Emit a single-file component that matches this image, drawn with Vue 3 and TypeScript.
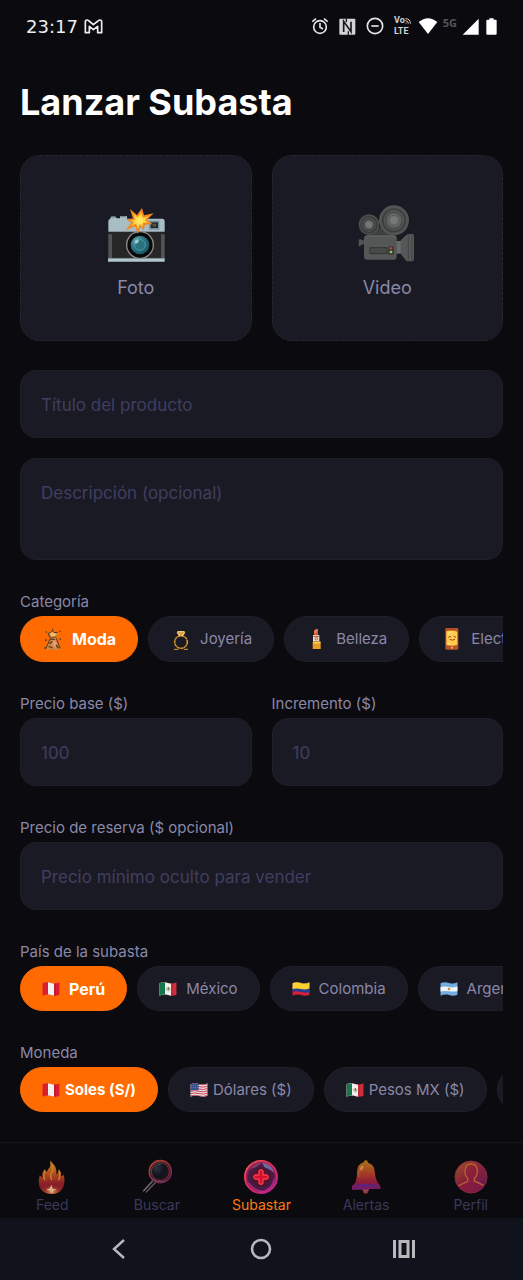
<script setup lang="ts">
import { ref } from 'vue'

interface Option {
  id: string
  label: string
  icon: string
  box: string
}

const flagBox = '0 0 54 42'

const categories: Option[] = [
  { id: 'moda', label: 'Moda', icon: 'ic-dress', box: '126 117 66 66' },
  { id: 'joyeria', label: 'Joyería', icon: 'ic-ring', box: '510 117 66 66' },
  { id: 'belleza', label: 'Belleza', icon: 'ic-lipstick', box: '129 117 66 66' },
  { id: 'electronica', label: 'Electrónica', icon: 'ic-phone', box: '528 117 66 66' },
]

const countries: Option[] = [
  { id: 'pe', label: 'Perú', icon: 'flag-pe', box: flagBox },
  { id: 'mx', label: 'México', icon: 'flag-mx', box: flagBox },
  { id: 'co', label: 'Colombia', icon: 'flag-co', box: flagBox },
  { id: 'ar', label: 'Argentina', icon: 'flag-ar', box: flagBox },
]

const currencies: Option[] = [
  { id: 'pen', label: 'Soles (S/)', icon: 'flag-pe', box: flagBox },
  { id: 'usd', label: 'Dólares ($)', icon: 'flag-us', box: flagBox },
  { id: 'mxn', label: 'Pesos MX ($)', icon: 'flag-mx', box: flagBox },
  { id: 'cop', label: 'Pesos COP ($)', icon: 'flag-co', box: flagBox },
]

const tabs: Option[] = [
  { id: 'feed', label: 'Feed', icon: 'nav-flame', box: '104 72 108 108' },
  { id: 'buscar', label: 'Buscar', icon: 'nav-search', box: '417 72 108 108' },
  { id: 'subastar', label: 'Subastar', icon: 'nav-plus', box: '-54 72 108 108' },
  { id: 'alertas', label: 'Alertas', icon: 'nav-bell', box: '258 72 108 108' },
  { id: 'perfil', label: 'Perfil', icon: 'nav-user', box: '572 72 108 108' },
]

const title = ref('')
const description = ref('')
const basePrice = ref('')
const increment = ref('')
const reserve = ref('')
const category = ref('moda')
const country = ref('pe')
const currency = ref('pen')
const activeTab = ref('subastar')
</script>

<template>
  <div class="app">
    <svg class="sprite" width="0" height="0" aria-hidden="true">
      <defs>
        <linearGradient id="g-flame" x1="0" y1="0" x2="0" y2="1">
          <stop offset="0" stop-color="#c08c24" /><stop offset=".35" stop-color="#b8561e" />
          <stop offset=".7" stop-color="#8a1e27" /><stop offset="1" stop-color="#7c2427" />
        </linearGradient>
        <radialGradient id="g-ember" cx=".5" cy=".85" r=".5">
          <stop offset="0" stop-color="#e0a060" /><stop offset=".5" stop-color="#b0482c" stop-opacity=".7" />
          <stop offset="1" stop-color="#8a1e28" stop-opacity="0" />
        </radialGradient>
        <linearGradient id="g-lens" x1="0" y1="0" x2=".7" y2="1">
          <stop offset="0" stop-color="#b04a2c" /><stop offset=".5" stop-color="#94303a" /><stop offset="1" stop-color="#702058" />
        </linearGradient>
        <radialGradient id="g-glass" cx=".35" cy=".35" r=".7">
          <stop offset="0" stop-color="#283040" /><stop offset=".5" stop-color="#10131c" /><stop offset="1" stop-color="#2b1724" />
        </radialGradient>
        <radialGradient id="g-orb" cx=".5" cy=".5" r=".5">
          <stop offset="0" stop-color="#a50f32" /><stop offset=".45" stop-color="#48152f" />
          <stop offset=".78" stop-color="#4a1d49" /><stop offset=".9" stop-color="#a62055" /><stop offset="1" stop-color="#e43a78" />
        </radialGradient>
        <linearGradient id="g-rim" x1="0" y1="0" x2="1" y2="1">
          <stop offset="0" stop-color="#ff6250" /><stop offset=".5" stop-color="#dc2850" /><stop offset="1" stop-color="#ae1bc0" />
        </linearGradient>
        <linearGradient id="g-bell" x1="0" y1="0" x2="0" y2="1">
          <stop offset="0" stop-color="#a87418" /><stop offset=".35" stop-color="#a84222" />
          <stop offset=".65" stop-color="#8f1b38" /><stop offset=".86" stop-color="#701d6c" /><stop offset="1" stop-color="#9a3f35" />
        </linearGradient>
        <linearGradient id="g-user" x1="0" y1="0" x2=".8" y2="1">
          <stop offset="0" stop-color="#a35426" /><stop offset=".5" stop-color="#842338" /><stop offset="1" stop-color="#681658" />
        </linearGradient>
        <radialGradient id="g-camera" cx=".35" cy=".3" r=".8">
          <stop offset="0" stop-color="#70aeb9" /><stop offset=".4" stop-color="#2f7b88" /><stop offset="1" stop-color="#155260" />
        </radialGradient>
        <radialGradient id="g-flash" cx=".5" cy=".5" r=".5">
          <stop offset="0" stop-color="#fff176" /><stop offset=".6" stop-color="#ffd03d" /><stop offset="1" stop-color="#f6a623" />
        </radialGradient>
        <clipPath id="wave">
          <path d="M1 4 C10 0 18 0 27 3 S44 5 53 1 V38 C44 42 36 42 27 39 S10 38 1 41Z" />
        </clipPath>
      </defs>

      <symbol id="photo" viewBox="76 42 180 180">
        <path d="M83 93 Q83 88 88 87 L91 80 H105 L108 85 H118 V78 H139 V86 H246 Q252 87 252 94 V125 H83Z" fill="#a9bdc4" />
        <path d="M92 81 h12 M119 80 h18" stroke="#718891" stroke-width="4" />
        <path d="M205 92 H236 V119 H205Z" fill="#7a929b" />
        <rect x="210" y="97" width="22" height="17" fill="#20272b" />
        <rect x="216" y="101" width="11" height="9" fill="#54504c" />
        <path d="M82 126 H252 V206 H82Z" fill="#262627" />
        <path d="M83 133 H94 V204 H83Z M241 133 H252 V204 H241Z" fill="#515355" />
        <path d="M82 205 H252 V215 H82Z" fill="#b3c6cd" />
        <path d="M82 205 H252" stroke="#718891" stroke-width="2" />
        <circle cx="178" cy="165" r="42" fill="#8d8c8c" />
        <circle cx="178" cy="165" r="38" fill="#080809" />
        <circle cx="178" cy="165" r="28" fill="url(#g-camera)" />
        <circle cx="178" cy="165" r="16" fill="#297381" stroke="#4c96a0" stroke-width="3" />
        <ellipse cx="168" cy="155" rx="7" ry="5" fill="#9dcbd2" transform="rotate(-38 168 155)" />
        <path d="M148 57 L169 75 L184 54 L190 76 L219 70 L199 89 L216 103 L193 104 L189 121 L179 110 L171 132 L164 109 L135 121 L152 98 L136 88 L157 86Z" fill="#f18720" />
        <path d="M154 66 L171 82 L182 65 L187 83 L207 77 L193 90 L204 98 L187 98 L185 111 L177 103 L171 121 L167 101 L147 110 L160 96 L148 91 L164 89Z" fill="url(#g-flash)" />
      </symbol>

      <symbol id="video" viewBox="82 42 180 180">
        <path d="M119 124 Q145 113 151 112 H181 L194 136 H119Z" fill="#3c3f3d" />
        <circle cx="118" cy="104" r="31" fill="#4b4d4c" />
        <circle cx="118" cy="104" r="24" fill="none" stroke="#373b39" stroke-width="4" />
        <circle cx="118" cy="104" r="15" fill="#686969" stroke="#3a3d3b" stroke-width="3" />
        <circle cx="118" cy="104" r="8" fill="#777877" />
        <circle cx="193" cy="91" r="45" fill="#525453" />
        <circle cx="193" cy="91" r="34" fill="none" stroke="#3a3e3c" stroke-width="5" />
        <circle cx="193" cy="91" r="24" fill="#616362" stroke="#454746" stroke-width="3" />
        <circle cx="193" cy="91" r="12" fill="#777978" />
        <path d="M87 149 L92 147 L98 151 H105 V163 H98 L91 169 H87Z" fill="#505251" />
        <rect x="103" y="136" width="98" height="73" rx="9" fill="#555756" />
        <path d="M110 138 H192 Q199 138 199 145" stroke="#676968" stroke-width="3" fill="none" />
        <path d="M200 153 H215 V191 H200Z" fill="#686b69" />
        <path d="M213 151 L229 136 Q233 132 238 132 H248 Q253 132 253 138 V207 Q253 214 247 214 H235 Q230 214 227 209 L213 191Z" fill="#555856" />
        <path d="M236 134 V211 M247 136 V210" stroke="#444745" stroke-width="4" />
        <rect x="121" y="173" width="51" height="18" fill="#484a49" stroke="#313433" stroke-width="3" />
        <rect x="176" y="169" width="17" height="25" rx="2" fill="#373a38" />
        <circle cx="184" cy="175" r="4" fill="#b94438" />
        <circle cx="184" cy="186" r="4" fill="#92d456" />
      </symbol>

      <symbol id="ic-dress" viewBox="126 117 66 66">
        <path d="M157 119 L160 130 L170 128 L176 132 L169 145 L174 157 L182 181 L172 184 L162 181 L149 184 L136 181 L144 159 L149 145 L142 137 L146 129 L155 132Z" fill="#d28745" />
        <path d="M157 119 L160 131 L173 130 M155 128 L144 134 L149 144 H169 M151 147 L144 164 L137 180 M169 148 L180 178" fill="none" stroke="#55331c" stroke-width="3" />
        <path d="M151 132 L157 129 L168 134 L166 142 L153 143Z" fill="#f7bd5c" />
        <path d="M162 146 L171 165 L166 178 L157 165Z" fill="#e59b7d" />
        <path d="M151 150 L165 152 M148 164 L157 158 M146 172 L158 177 M168 168 L176 178" stroke="#693817" stroke-width="4" />
        <path d="M137 127h4v4h-4z M177 125h5v4h-5z M135 151h5v5h-5z M179 148h4v5h-4z M133 175h5v4h-5z" fill="#713c14" />
      </symbol>

      <symbol id="ic-ring" viewBox="510 117 66 66">
        <circle cx="543" cy="159" r="19" fill="none" stroke="#8d5b19" stroke-width="5" />
        <circle cx="543" cy="159" r="19" fill="none" stroke="#efb545" stroke-width="3" stroke-dasharray="8 3" />
        <path d="M533 126 H553 L556 132 L547 142 H539 L530 132Z" fill="#ffd57a" />
        <path d="M531 132 H555 M538 127 L543 141 L548 127" fill="none" stroke="#b77527" stroke-width="2" />
        <path d="M522 181 H535 M551 181 H564" stroke="#db9d37" stroke-width="3" />
      </symbol>

      <symbol id="ic-lipstick" viewBox="129 117 66 66">
        <path d="M153 139 V126 Q157 119 165 120 V139Z" fill="#d35d3a" />
        <path d="M153 127 Q158 120 164 120 L156 136Z" fill="#ed895a" />
        <rect x="150" y="138" width="19" height="19" fill="#ece2cf" />
        <path d="M151 142 H168" stroke="#aa5236" stroke-width="3" />
        <circle cx="160" cy="149" r="4" fill="none" stroke="#c65341" stroke-width="3" />
        <path d="M149 158 H173 V180 H149Z" fill="#e69e24" />
        <path d="M150 158 H172 V163 H150Z" fill="#ffd157" />
      </symbol>

      <symbol id="ic-phone" viewBox="528 117 66 66">
        <rect x="541" y="117" width="39" height="65" rx="4" fill="#b85327" />
        <path d="M544 127 Q561 122 577 128 V168 Q560 173 544 168Z" fill="#ffca4d" />
        <path d="M550 145 L558 142 M566 142 L573 145 M554 151 Q562 156 570 151 M553 121 H567" stroke="#8f4b1c" stroke-width="3" fill="none" />
        <circle cx="561" cy="176" r="3" fill="#ffc468" />
        <path d="M549 132 H559 M549 164 H555" stroke="#ffe98b" stroke-width="3" />
      </symbol>

      <symbol id="flag-pe" viewBox="0 0 54 42">
        <g clip-path="url(#wave)">
          <rect width="54" height="42" fill="#d81e32" /><rect x="18" width="18" height="42" fill="#f4f0f0" />
          <path d="M36 0h6v42h-6z" fill="#a9122e" opacity=".45" />
        </g>
      </symbol>
      <symbol id="flag-mx" viewBox="0 0 54 42">
        <g clip-path="url(#wave)">
          <rect width="54" height="42" fill="#cf2e3d" /><rect width="36" height="42" fill="#f0f0ec" /><rect width="18" height="42" fill="#16754f" />
          <path d="M22 18 Q24 27 29 27 Q33 24 32 18" fill="none" stroke="#6e884b" stroke-width="2" />
          <path d="M25 16 L30 15 L31 22 L27 24Z" fill="#956c42" />
          <path d="M36 0h5v42h-5z" fill="#a61f34" opacity=".4" />
        </g>
      </symbol>
      <symbol id="flag-co" viewBox="0 0 54 42">
        <g clip-path="url(#wave)">
          <rect width="54" height="42" fill="#d81f3a" />
          <path d="M0 0H54V29Q43 35 27 30T0 31Z" fill="#263f90" />
          <path d="M0 0H54V19Q43 24 27 21T0 22Z" fill="#fbd12d" />
        </g>
      </symbol>
      <symbol id="flag-ar" viewBox="0 0 54 42">
        <g clip-path="url(#wave)">
          <rect width="54" height="42" fill="#73aee0" />
          <path d="M0 15Q14 12 27 15T54 13V27Q43 30 27 28T0 29Z" fill="#f3f4f4" />
          <circle cx="27" cy="21" r="4" fill="#c98b3b" />
        </g>
      </symbol>
      <symbol id="flag-us" viewBox="0 0 54 42">
        <g clip-path="url(#wave)">
          <rect width="54" height="42" fill="#e7e2e6" />
          <path d="M0 4Q14 0 27 4T54 2M0 11Q14 7 27 11T54 9M0 18Q14 14 27 18T54 16M0 25Q14 21 27 25T54 23M0 32Q14 28 27 32T54 30M0 39Q14 35 27 39T54 37" fill="none" stroke="#c93c4c" stroke-width="3" />
          <path d="M0 0H26V22Q14 19 0 23Z" fill="#394f8c" />
          <path d="M4 8H24M4 14H24" stroke="#b5bed9" stroke-width="2" stroke-dasharray="2 4" />
        </g>
      </symbol>

      <symbol id="nav-flame" viewBox="104 72 108 108">
        <path d="M153 75 Q158 85 165 91 Q173 101 171 119 Q177 116 178 103 Q187 112 185 124 L194 120 Q197 135 194 149 Q189 174 160 177 Q128 178 120 154 Q116 137 121 121 L130 128 Q126 111 137 103 L142 112 Q146 103 151 97 Q157 86 153 75Z" fill="url(#g-flame)" />
        <path d="M120 136 Q128 148 137 146 Q146 138 157 144 Q170 136 178 146 Q187 144 194 134 Q194 174 160 177 Q126 177 120 152Z" fill="url(#g-ember)" />
        <path d="M154 84 Q164 96 159 110 Q150 122 157 134 M137 108 Q130 122 136 134 M180 108 Q184 122 178 134" stroke="#c98428" stroke-width="4" fill="none" stroke-linecap="round" />
        <path d="M156 149 L160 161 L172 163 L162 167 L157 176 L152 167 L141 164 L151 160Z" fill="#ddb08b" />
      </symbol>

      <symbol id="nav-search" viewBox="417 72 108 108">
        <path d="M457 138 L430 168 M467 142 L439 171" stroke="#62595f" stroke-width="4" stroke-linecap="round" />
        <path d="M459 139 L432 168" stroke="#8a838e" stroke-width="2" />
        <circle cx="481" cy="110" r="33" fill="url(#g-glass)" stroke="url(#g-lens)" stroke-width="5" />
        <circle cx="481" cy="110" r="27" fill="none" stroke="#8a2f38" stroke-width="3" />
        <path d="M464 98 Q470 88 484 87" fill="none" stroke="#3c4a5c" stroke-width="3" />
        <path d="M456 130 Q474 145 495 139" fill="none" stroke="#78436b" stroke-width="3" />
      </symbol>

      <symbol id="nav-plus" viewBox="-54 72 108 108">
        <circle cx="0" cy="126" r="49" fill="url(#g-orb)" stroke="url(#g-rim)" stroke-width="4" />
        <path d="M-34 104 Q-20 84 0 84 Q-8 94 -18 98 Q-28 100 -34 104Z" fill="#c86a8a" opacity=".4" />
        <path d="M4 83 Q31 86 40 113 Q27 102 10 97Z" fill="#8088c0" opacity=".7" />
        <path d="M-38 143 Q-18 171 12 170 M40 132 Q35 157 14 167" fill="none" stroke="#d72bbb" stroke-width="4" opacity=".6" />
        <path d="M-6 108 Q0 100 6 108 V120 H18 Q26 126 18 132 H6 V144 Q0 152 -6 144 V132 H-18 Q-26 126 -18 120 H-6Z" fill="#d41030" stroke="#ff3a4a" stroke-width="4" stroke-linejoin="round" />
      </symbol>

      <symbol id="nav-bell" viewBox="258 72 108 108">
        <path d="M305 82 Q307 75 312 76 Q317 76 318 83 Q337 88 338 108 Q339 128 346 141 L355 153 V162 H321 Q320 176 311 176 Q303 176 302 164 H270 V154 L280 143 Q285 131 285 111 Q286 87 305 82Z" fill="url(#g-bell)" />
        <path d="M291 126 Q287 104 300 92 M303 164 Q311 172 319 164" fill="none" stroke="#b06037" stroke-width="3" />
        <ellipse cx="299" cy="99" rx="4" ry="8" fill="#c68b51" transform="rotate(25 299 99)" />
        <path d="M280 154 Q311 146 346 154" fill="none" stroke="#582583" stroke-width="6" />
      </symbol>

      <symbol id="nav-user" viewBox="572 72 108 108">
        <circle cx="626" cy="126" r="48" fill="url(#g-user)" stroke="#8a2b44" stroke-width="3" />
        <path d="M590 153 L616 139 V130 Q607 122 609 105 Q611 89 627 89 Q645 91 643 111 Q641 124 636 130 V138 L662 152 Q650 172 627 173 Q602 173 590 153Z" fill="#8e1b3e" opacity=".55" />
        <path d="M608 107 Q609 87 627 87 Q645 88 645 108 Q644 125 636 130 V138 Q650 143 663 151 M608 107 Q608 124 616 130 V139 L589 152" fill="none" stroke="#b55f33" stroke-width="4" />
      </symbol>
    </svg>

    <header class="status">
      <div class="status-left">
        <time>23:17</time>
        <svg width="19" height="15" viewBox="0 0 57 45" aria-label="Gmail">
          <path d="M4 41 V8 Q4 3 9 3 Q12 3 15 6 L28 17 L42 6 Q45 3 48 3 Q53 3 53 8 V41 H41 V22 L28 32 L16 22 V41Z" fill="none" stroke="#eeeef0" stroke-width="5" stroke-linejoin="round" />
        </svg>
      </div>
      <div class="status-right">
        <svg width="18" height="18" viewBox="0 0 54 54" aria-label="Alarma">
          <circle cx="27" cy="30" r="19" fill="none" stroke="#e4e4e6" stroke-width="5" />
          <path d="M27 18 V31 L36 36 M4 14 L15 5 M39 5 L50 14" fill="none" stroke="#e4e4e6" stroke-width="5" />
        </svg>
        <svg width="17" height="17" viewBox="0 0 51 51" aria-label="NFC">
          <rect x="1" y="2" width="48" height="48" rx="3" fill="#d4d4d7" />
          <path d="M14 42 V10 L36 41 V11" fill="none" stroke="#17171c" stroke-width="5" />
          <path d="M22 2 V12 M28 40 V50" stroke="#17171c" stroke-width="4" />
        </svg>
        <svg width="18" height="18" viewBox="0 0 54 54" aria-label="No molestar">
          <circle cx="27" cy="27" r="23" fill="none" stroke="#e4e4e6" stroke-width="5" />
          <path d="M16 27 H38" stroke="#e4e4e6" stroke-width="5" />
        </svg>
        <span class="volte">
          <span class="vo">Vo<svg width="6" height="6" viewBox="0 0 18 18" aria-hidden="true"><path d="M1 2 Q16 2 16 17 M1 8 Q10 8 10 17 M1 14 L4 17" fill="none" stroke="#d4d4d7" stroke-width="3" /></svg></span>
          <span>LTE</span>
        </span>
        <span class="signal">
          <svg width="20" height="18" viewBox="0 0 60 54" aria-label="Wi-Fi"><path d="M2 15 Q30 -8 58 15 L30 51Z" fill="#fff" /></svg>
          <span class="five">5G</span>
          <svg width="17" height="17" viewBox="0 0 51 51" aria-label="Señal"><path d="M2 50 H50 V2Z" fill="#fff" /></svg>
        </span>
        <svg width="11" height="17" viewBox="0 0 33 51" aria-label="Batería"><path d="M10 1 H23 V5 H29 Q32 5 32 8 V47 Q32 50 29 50 H4 Q1 50 1 47 V8 Q1 5 4 5 H10Z" fill="#fff" /></svg>
      </div>
    </header>

    <main class="content">
      <h1>Lanzar Subasta</h1>

      <div class="pair">
        <button type="button" class="media"><svg width="60" height="60" aria-hidden="true"><use href="#photo" /></svg><span>Foto</span></button>
        <button type="button" class="media"><svg width="60" height="60" aria-hidden="true"><use href="#video" /></svg><span>Video</span></button>
      </div>

      <form class="form" @submit.prevent>
        <input v-model="title" class="field lead" type="text" placeholder="Título del producto" aria-label="Título del producto">
        <textarea v-model="description" class="field area" placeholder="Descripción (opcional)" aria-label="Descripción (opcional)"></textarea>

        <section class="group" aria-labelledby="l-category">
          <span id="l-category" class="label">Categoría</span>
          <div class="chips">
            <button v-for="c in categories" :key="c.id" type="button" class="chip" :class="{ on: category === c.id }" :aria-pressed="category === c.id" @click="category = c.id">
              <svg width="22" height="22" aria-hidden="true"><use :href="`#${c.icon}`" /></svg>{{ c.label }}
            </button>
          </div>
        </section>

        <div class="pair group">
          <div>
            <label class="label" for="base">Precio base ($)</label>
            <input id="base" v-model="basePrice" class="field" type="text" inputmode="decimal" placeholder="100">
          </div>
          <div>
            <label class="label" for="step">Incremento ($)</label>
            <input id="step" v-model="increment" class="field" type="text" inputmode="decimal" placeholder="10">
          </div>
        </div>

        <div class="group">
          <label class="label" for="reserve">Precio de reserva ($ opcional)</label>
          <input id="reserve" v-model="reserve" class="field" type="text" inputmode="decimal" placeholder="Precio mínimo oculto para vender">
        </div>

        <section class="group" aria-labelledby="l-country">
          <span id="l-country" class="label">País de la subasta</span>
          <div class="chips countries">
            <button v-for="c in countries" :key="c.id" type="button" class="chip" :class="{ on: country === c.id }" :aria-pressed="country === c.id" @click="country = c.id">
              <svg width="18" height="14" aria-hidden="true"><use :href="`#${c.icon}`" /></svg>{{ c.label }}
            </button>
          </div>
        </section>

        <section class="group" aria-labelledby="l-currency">
          <span id="l-currency" class="label">Moneda</span>
          <div class="chips currencies">
            <button v-for="c in currencies" :key="c.id" type="button" class="chip" :class="{ on: currency === c.id }" :aria-pressed="currency === c.id" @click="currency = c.id">
              <svg width="18" height="14" aria-hidden="true"><use :href="`#${c.icon}`" /></svg>{{ c.label }}
            </button>
          </div>
        </section>
      </form>
    </main>

    <nav class="tabs" aria-label="Principal">
      <a v-for="t in tabs" :key="t.id" :href="`#${t.id}`" class="tab" :class="{ current: activeTab === t.id }" @click="activeTab = t.id">
        <svg width="36" height="36" aria-hidden="true"><use :href="`#${t.icon}`" /></svg>
        <span>{{ t.label }}</span>
      </a>
    </nav>

    <footer class="system">
      <button type="button" aria-label="Atrás"><svg width="24" height="24" viewBox="0 0 24 24"><path d="M17 3 L7 12 L17 21" fill="none" stroke="#b8b8bd" stroke-width="2.4" /></svg></button>
      <button type="button" aria-label="Inicio"><svg width="24" height="24" viewBox="0 0 24 24"><circle cx="12" cy="12" r="9" fill="none" stroke="#b8b8bd" stroke-width="2.6" /></svg></button>
      <button type="button" aria-label="Recientes"><svg width="24" height="24" viewBox="0 0 24 24"><path d="M2.500 3 V21 M21.500 3 V21 M8 4.500 H16 V19.500 H8Z" fill="none" stroke="#b8b8bd" stroke-width="3" /></svg></button>
    </footer>
  </div>
</template>

<style>
body {
  background: #0a0a0f;
}
</style>

<style scoped>
.app {
  display: flex;
  flex-direction: column;
  min-height: 100vh;
  background: #0a0a0f;
  color: #fff;
  font-family: Inter, "Noto Sans", sans-serif;
}
.app *,
.app {
  box-sizing: border-box;
}
.sprite {
  position: absolute;
}
svg {
  display: block;
  flex: none;
}
button {
  font: inherit;
  cursor: pointer;
}
.status {
  display: flex;
  align-items: center;
  justify-content: space-between;
  height: 52px;
  padding: 0 26px;
}
.status-left,
.status-right,
.signal,
.vo {
  display: flex;
  align-items: center;
}
.status-left {
  gap: 6px;
  font-family: "DejaVu Sans", sans-serif;
  font-size: 18px;
  color: #eeeef0;
}
.status-right {
  gap: 10px;
}
.volte {
  font: 700 9px/11px Roboto, sans-serif;
  color: #d4d4d7;
}
.volte > span {
  display: flex;
  height: 11px;
}
.signal {
  gap: 5px;
  margin: 0 -3px;
}
.five {
  align-self: flex-start;
  font: 700 11px/11px "Noto Sans", sans-serif;
  color: #55555a;
}
.content {
  flex: 1;
  padding: 28px 20px 30px;
}
h1 {
  margin: 0 0 31px;
  font-size: 36px;
  line-height: 44px;
  font-weight: 700;
}
.pair {
  display: grid;
  grid-template-columns: 1fr 1fr;
  gap: 20px;
}
.media {
  display: flex;
  flex-direction: column;
  align-items: center;
  gap: 12px;
  padding: 48px 0 40px;
  border: 1px dashed #262634;
  border-radius: 20px;
  background: #1a1a24;
  color: #8a88a8;
  font-size: 18px;
  line-height: 24px;
}
.field {
  display: block;
  width: 100%;
  height: 68px;
  padding: 2px 20px 0;
  border: 1px solid #20202c;
  border-radius: 16px;
  outline: none;
  background: #1a1a24;
  color: #fff;
  font: 400 17px/24px Inter, "Noto Sans", sans-serif;
}
.field::placeholder {
  color: #403e60;
  opacity: 1;
}
.lead {
  margin-top: 29px;
}
.area {
  height: 102px;
  margin-top: 20px;
  padding-top: 22px;
  resize: none;
}
.group {
  margin-top: 31px;
}
.label {
  display: block;
  margin-bottom: 3px;
  color: #8a88a8;
  font-size: 15px;
  line-height: 22px;
}
.chips {
  display: flex;
  gap: 10px;
  overflow-x: auto;
  scrollbar-width: none;
}
.chip {
  display: flex;
  flex: none;
  align-items: center;
  gap: 8px;
  height: 46px;
  padding: 0 21px;
  border: 1px solid #20202c;
  border-radius: 23px;
  background: #1a1a24;
  color: #8a88a8;
  font-size: 15px;
  line-height: 22px;
  white-space: nowrap;
}
.countries .chip,
.currencies .chip {
  height: 45px;
}
.countries .chip {
  gap: 9px;
}
.currencies .chip {
  gap: 5px;
}
.chip.on {
  border-color: #ff6b00;
  background: #ff6b00;
  color: #fff;
  font-size: 16px;
  font-weight: 700;
}
.currencies .chip.on {
  font-size: 15px;
}
.tabs {
  display: grid;
  grid-template-columns: repeat(5, 1fr);
  padding: 16px 0 3px;
  border-top: 1px solid #15151c;
}
.tab {
  display: flex;
  flex-direction: column;
  align-items: center;
  color: #3b395a;
  font-size: 14px;
  line-height: 20px;
  text-decoration: none;
}
.tab.current {
  color: #ff7a10;
}
.system {
  display: grid;
  grid-template-columns: repeat(3, 1fr);
  height: 62px;
  padding: 0 48px;
  background: #11131c;
}
.system button {
  display: grid;
  place-items: center;
  padding: 0;
  border: 0;
  background: none;
}
</style>
